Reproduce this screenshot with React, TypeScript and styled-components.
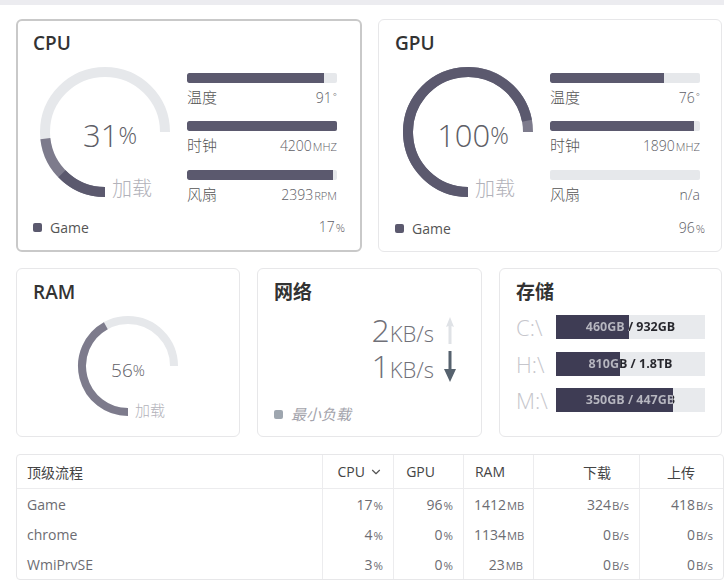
import React from 'react';
import styled, { createGlobalStyle } from 'styled-components';
import { ChevronDown } from 'lucide-react';

const Global = createGlobalStyle`
  html, body { margin: 0; padding: 0; background: #fff; }
  body {
    font-family: "Open Sans", "Noto Sans CJK SC", sans-serif;
    color: #333;
    overflow: hidden;
  }
  * { box-sizing: border-box; }
`;

const DARK = '#5b596e';
const LIGHT = '#7d7b8c';
const TRACK = '#e6e8eb';
const DRIVE_FILL = '#3e3c54';
const DRIVE_TRACK = '#e8eaed';

const Page = styled.div`
  width: 724px;
  height: 588px;
  display: flex;
  flex-direction: column;
`;

const TopStrip = styled.div`
  height: 5px;
  flex: none;
  background: #ececf0;
`;

const Content = styled.div`
  padding: 14px 2px 0 16px;
  display: flex;
  flex-direction: column;
  gap: 16px;
`;

const TopRow = styled.div`
  display: grid;
  grid-template-columns: 346px 344px;
  gap: 16px;
  height: 233px;
`;

const MidRow = styled.div`
  display: grid;
  grid-template-columns: 224px 225px 223px;
  gap: 17px;
  height: 169px;
`;

const Card = styled.div<{ $selected?: boolean }>`
  border-radius: 6px;
  background: #fff;
  border: ${(p) => (p.$selected ? '2px solid #c9c9c9' : '1px solid #e7e7e9')};
  padding: ${(p) => (p.$selected ? '12px 15px 12px 15px' : '13px 16px 12px 16px')};
  display: flex;
  flex-direction: column;
  min-width: 0;
`;

const Title = styled.div`
  font-size: 19px;
  line-height: 20px;
  font-weight: 600;
  color: #333;
  font-family: "Open Sans", "Noto Sans CJK SC", sans-serif;
`;

const GaugeRow = styled.div<{ $shift: number }>`
  display: flex;
  align-items: flex-start;
  margin-top: 9px;
  padding-left: ${(p) => p.$shift}px;
`;

const GaugeBox = styled.div<{ $size: number }>`
  position: relative;
  width: ${(p) => p.$size}px;
  height: ${(p) => p.$size}px;
  flex: none;
  svg { display: block; }
`;

const GaugeValue = styled.div<{ $big?: boolean }>`
  position: absolute;
  inset: 0;
  display: flex;
  align-items: center;
  justify-content: center;
  padding-left: ${(p) => (p.$big ? 10 : 0)}px;
  padding-top: ${(p) => (p.$big ? 6 : 8)}px;
  font-weight: 300;
  color: #5e5e66;
  font-size: ${(p) => (p.$big ? 31 : 19)}px;
  line-height: 1;
  span { font-size: ${(p) => (p.$big ? 23 : 15)}px; }
`;

const GaugeLabel = styled.div<{ $big?: boolean }>`
  position: absolute;
  left: ${(p) => (p.$big ? 77 : 59)}px;
  top: ${(p) => (p.$big ? 114 : 86)}px;
  font-size: ${(p) => (p.$big ? 20 : 15)}px;
  line-height: ${(p) => (p.$big ? 24 : 20)}px;
  color: #b2b2ba;
  font-family: "Noto Sans CJK SC", sans-serif;
  font-weight: 300;
`;

const Bars = styled.div`
  width: 150px;
  margin-left: 12px;
  padding-top: 11px;
  display: flex;
  flex-direction: column;
  gap: 13px;
`;

const BarGroup = styled.div`
  display: flex;
  flex-direction: column;
  gap: 4px;
`;

const Track = styled.div`
  height: 10px;
  background: ${TRACK};
  border-radius: 2px;
  overflow: hidden;
`;

const Fill = styled.div`
  height: 100%;
  background: ${DARK};
  border-radius: 2px 0 0 2px;
`;

const BarInfo = styled.div`
  display: flex;
  justify-content: space-between;
  align-items: baseline;
  line-height: 20px;
`;

const BarLabel = styled.span`
  font-size: 15px;
  color: #555;
  font-weight: 300;
  font-family: "Noto Sans CJK SC", sans-serif;
`;

const BarValue = styled.span`
  font-size: 14px;
  font-weight: 300;
  color: #5e5e66;
`;

const Unit = styled.span`
  font-size: 0.8em;
  text-transform: uppercase;
  margin-left: 1px;
`;

const LowUnit = styled.span`
  font-size: 0.82em;
  margin-left: 1px;
`;

const Footer = styled.div`
  margin-top: auto;
  display: flex;
  justify-content: space-between;
  align-items: center;
  line-height: 20px;
`;

const Legend = styled.div`
  display: flex;
  align-items: center;
  gap: 8px;
  font-size: 14px;
  color: #555;
`;

const Dot = styled.i<{ $color: string }>`
  width: 9px;
  height: 9px;
  border-radius: 2px;
  background: ${(p) => p.$color};
  display: inline-block;
`;

const FooterValue = styled.span`
  font-size: 14px;
  font-weight: 300;
  color: #5e5e66;
`;

const CenterGauge = styled.div`
  display: flex;
  justify-content: center;
  margin-top: 12px;
`;

const Speeds = styled.div`
  margin-top: 10px;
  display: flex;
  flex-direction: column;
  align-items: flex-end;
  padding-right: 9px;
`;

const SpeedRow = styled.div`
  display: flex;
  align-items: center;
  height: 36px;
`;

const SpeedText = styled.span`
  display: inline-block;
  font-size: 32px;
  font-weight: 300;
  color: #707078;
  line-height: 30px;
  height: 30px;
  span { font-size: 22px; }
`;

const ArrowSlot = styled.div`
  width: 12px;
  margin-left: 10px;
  display: flex;
  svg { display: block; }
`;

const MutedText = styled.span`
  font-size: 15px;
  font-style: italic;
  color: #a4a4ac;
  font-family: "Noto Sans CJK SC", sans-serif;
`;

const Drives = styled.div`
  margin-top: 13px;
  display: flex;
  flex-direction: column;
  gap: 12.5px;
`;

const DriveRow = styled.div`
  display: flex;
  align-items: center;
  height: 24px;
`;

const DriveLabel = styled.span`
  width: 42px;
  font-size: 22px;
  font-weight: 300;
  color: #c6c6cc;
  line-height: 24px;
`;

const DriveBar = styled.div`
  width: 149px;
  height: 24px;
  background: ${DRIVE_TRACK};
`;

const DriveText = styled.div`
  width: 149px;
  height: 24px;
  line-height: 24px;
  text-align: center;
  font-size: 12.5px;
  font-weight: 700;
  white-space: nowrap;
  color: transparent;
  -webkit-background-clip: text;
  background-clip: text;
`;

const Table = styled.table`
  margin-top: 1px;
  width: 706px;
  border: 1px solid #e7e7e9;
  border-radius: 4px;
  border-spacing: 0;
  font-size: 14px;
  table-layout: fixed;
`;

const Th = styled.th<{ $left?: boolean; $w: number }>`
  width: ${(p) => p.$w}px;
  height: 34px;
  font-weight: 400;
  color: #444;
  text-align: ${(p) => (p.$left ? 'left' : 'right')};
  padding: ${(p) => (p.$left ? '0 10px' : '0 10px 0 0')};
  border-bottom: 1px solid #ececee;
  border-left: ${(p) => (p.$left ? 'none' : '1px solid #ececee')};
  white-space: nowrap;
`;

const SortSlot = styled.span`
  display: inline-flex;
  width: 18px;
  justify-content: flex-end;
  vertical-align: -2px;
`;

const Td = styled.td<{ $left?: boolean }>`
  height: 30px;
  color: #6c6c72;
  text-align: ${(p) => (p.$left ? 'left' : 'right')};
  padding: 0 10px;
  border-left: ${(p) => (p.$left ? 'none' : '1px solid #ececee')};
  white-space: nowrap;
`;

function arcPath(cx: number, cy: number, r: number, a0: number, a1: number) {
  const rad = (d: number) => (d * Math.PI) / 180;
  const x0 = cx + r * Math.cos(rad(a0));
  const y0 = cy + r * Math.sin(rad(a0));
  const x1 = cx + r * Math.cos(rad(a1));
  const y1 = cy + r * Math.sin(rad(a1));
  const large = a1 - a0 > 180 ? 1 : 0;
  return `M ${x0.toFixed(2)} ${y0.toFixed(2)} A ${r} ${r} 0 ${large} 1 ${x1.toFixed(2)} ${y1.toFixed(2)}`;
}

type GaugeProps = { big?: boolean; total: number; game?: number };

function Gauge({ big, total, game }: GaugeProps) {
  const size = big ? 140 : 104;
  const c = size / 2;
  const r = big ? 60 : 46;
  const sw = big ? 10 : 8;
  const start = 90;
  const at = (p: number) => start + (270 * p) / 100;
  return (
    <GaugeBox $size={size}>
      <svg width={size} height={size} viewBox={`0 0 ${size} ${size}`}>
        <path d={arcPath(c, c, r, start, 360)} stroke={TRACK} strokeWidth={sw} fill="none" />
        <path d={arcPath(c, c, r, start, at(total))} stroke={LIGHT} strokeWidth={sw} fill="none" />
        {game !== undefined && (
          <path d={arcPath(c, c, r, start, at(game))} stroke={DARK} strokeWidth={sw} fill="none" />
        )}
      </svg>
      <GaugeValue $big={big}>
        {total}
        <span>%</span>
      </GaugeValue>
      <GaugeLabel $big={big}>加载</GaugeLabel>
    </GaugeBox>
  );
}

type BarItem = { label: string; pct: number; value: React.ReactNode };

function BarList({ items }: { items: BarItem[] }) {
  return (
    <Bars>
      {items.map((b) => (
        <BarGroup key={b.label}>
          <Track>
            <Fill style={{ width: `${b.pct}%` }} />
          </Track>
          <BarInfo>
            <BarLabel>{b.label}</BarLabel>
            <BarValue>{b.value}</BarValue>
          </BarInfo>
        </BarGroup>
      ))}
    </Bars>
  );
}

const Deg = styled.sup`
  font-size: 0.7em;
  vertical-align: 0.35em;
  margin-left: 1px;
`;

const UpArrow = () => (
  <svg width="12" height="27" viewBox="0 0 12 27">
    <path d="M6 0 L10 10 L7.5 9 L7.5 27 L4.5 27 L4.5 9 L2 10 Z" fill="#dfe2e6" />
  </svg>
);

const DownArrow = () => (
  <svg width="12" height="31" viewBox="0 0 12 31">
    <path d="M4.5 0 L7.5 0 L7.5 18 L12 18 L6 31 L0 18 L4.5 18 Z" fill="#56626e" />
  </svg>
);

function Drive({ label, pct, text }: { label: string; pct: number; text: string }) {
  return (
    <DriveRow>
      <DriveLabel>{label}</DriveLabel>
      <DriveBar
        style={{
          background: `linear-gradient(to right, ${DRIVE_FILL} ${pct}%, ${DRIVE_TRACK} ${pct}%)`,
        }}
      >
        <DriveText
          style={{
            backgroundImage: `linear-gradient(to right, #b7b7c0 ${pct}%, #26262c ${pct}%)`,
          }}
        >
          {text}
        </DriveText>
      </DriveBar>
    </DriveRow>
  );
}

const rows = [
  { name: 'Game', cpu: 17, gpu: 96, ram: 1412, down: 324, up: 418 },
  { name: 'chrome', cpu: 4, gpu: 0, ram: 1134, down: 0, up: 0 },
  { name: 'WmiPrvSE', cpu: 3, gpu: 0, ram: 23, down: 0, up: 0 },
];

export default function App() {
  return (
    <Page>
      <Global />
      <TopStrip />
      <Content>
        <TopRow>
          <Card $selected>
            <Title>CPU</Title>
            <GaugeRow $shift={2}>
              <Gauge big total={31} game={17} />
              <BarList
                items={[
                  { label: '温度', pct: 91, value: <>91<Deg>°</Deg></> },
                  { label: '时钟', pct: 100, value: <>4200<Unit>MHz</Unit></> },
                  { label: '风扇', pct: 97, value: <>2393<Unit>RPM</Unit></> },
                ]}
              />
            </GaugeRow>
            <Footer>
              <Legend>
                <Dot $color={DARK} />
                Game
              </Legend>
              <FooterValue>
                17<LowUnit>%</LowUnit>
              </FooterValue>
            </Footer>
          </Card>
          <Card>
            <Title>GPU</Title>
            <GaugeRow $shift={3}>
              <Gauge big total={100} game={96} />
              <BarList
                items={[
                  { label: '温度', pct: 76, value: <>76<Deg>°</Deg></> },
                  { label: '时钟', pct: 96, value: <>1890<Unit>MHz</Unit></> },
                  { label: '风扇', pct: 0, value: 'n/a' },
                ]}
              />
            </GaugeRow>
            <Footer>
              <Legend>
                <Dot $color={DARK} />
                Game
              </Legend>
              <FooterValue>
                96<LowUnit>%</LowUnit>
              </FooterValue>
            </Footer>
          </Card>
        </TopRow>
        <MidRow>
          <Card>
            <Title>RAM</Title>
            <CenterGauge>
              <Gauge total={56} />
            </CenterGauge>
          </Card>
          <Card>
            <Title>网络</Title>
            <Speeds>
              <SpeedRow>
                <SpeedText>
                  2<span>KB/s</span>
                </SpeedText>
                <ArrowSlot>
                  <UpArrow />
                </ArrowSlot>
              </SpeedRow>
              <SpeedRow>
                <SpeedText>
                  1<span>KB/s</span>
                </SpeedText>
                <ArrowSlot>
                  <DownArrow />
                </ArrowSlot>
              </SpeedRow>
            </Speeds>
            <Footer>
              <Legend>
                <Dot $color="#9ea6af" />
                <MutedText>最小负载</MutedText>
              </Legend>
            </Footer>
          </Card>
          <Card>
            <Title>存储</Title>
            <Drives>
              <Drive label="C:\" pct={49} text="460GB / 932GB" />
              <Drive label="H:\" pct={43} text="810GB / 1.8TB" />
              <Drive label="M:\" pct={78.5} text="350GB / 447GB" />
            </Drives>
          </Card>
        </MidRow>
        <Table>
          <thead>
            <tr>
              <Th $left $w={305}>顶级流程</Th>
              <Th $w={71}>
                CPU
                <SortSlot>
                  <ChevronDown size={14} strokeWidth={2} color="#555" />
                </SortSlot>
              </Th>
              <Th $w={70}>GPU<SortSlot /></Th>
              <Th $w={70}>RAM<SortSlot /></Th>
              <Th $w={106}>下载<SortSlot /></Th>
              <Th $w={84}>上传<SortSlot /></Th>
            </tr>
          </thead>
          <tbody>
            {rows.map((r) => (
              <tr key={r.name}>
                <Td $left>{r.name}</Td>
                <Td>
                  {r.cpu}
                  <LowUnit>%</LowUnit>
                </Td>
                <Td>
                  {r.gpu}
                  <LowUnit>%</LowUnit>
                </Td>
                <Td>
                  {r.ram}
                  <Unit>MB</Unit>
                </Td>
                <Td>
                  {r.down}
                  <LowUnit>B/s</LowUnit>
                </Td>
                <Td>
                  {r.up}
                  <LowUnit>B/s</LowUnit>
                </Td>
              </tr>
            ))}
          </tbody>
        </Table>
      </Content>
    </Page>
  );
}
